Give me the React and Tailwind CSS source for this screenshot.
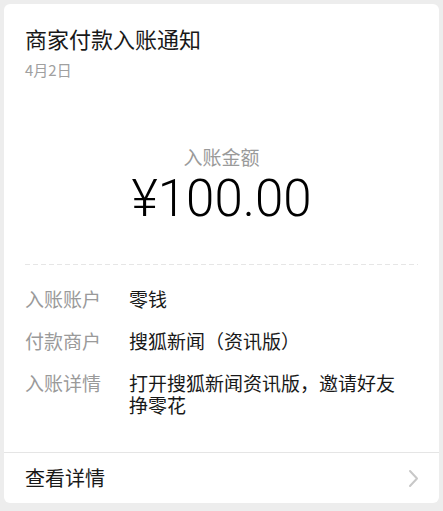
export default function App() {
  const cjk = { fontFamily: '"Noto Sans CJK SC", "Noto Sans", sans-serif' };
  return (
    <div className="w-[443px] h-[511px] bg-[#ededed] p-[4px] pb-[8px]" style={cjk}>
      <div className="bg-white rounded-[6px] h-[499px] flex flex-col overflow-hidden">
        <div className="px-[21px] pt-[19px] flex-1">
          <div className="text-[22px] leading-[30px] text-[#191919]">商家付款入账通知</div>
          <div className="mt-[7px] text-[15px] leading-[20px] text-[#a0a0a0]">4月2日</div>
          <div className="mt-[65px] text-center text-[19px] leading-[24px] text-[#9a9a9a]">入账金额</div>
          <div
            className="mt-[2px] text-center text-[51px] leading-[56px] font-light text-[#000]"
            style={{ fontFamily: 'Roboto, "Liberation Sans", Arial, sans-serif' }}
          >
            ¥100.00
          </div>
          <div className="mt-[37px] h-[1px] bg-[linear-gradient(to_right,#e6e6e6_60%,transparent_60%)] bg-[length:8px_1px] bg-repeat-x" />
          <div className="mt-[23px] flex flex-col gap-[20px] text-[19px] leading-[22px]">
            <div className="flex">
              <div className="w-[104px] shrink-0 text-[#9a9a9a]">入账账户</div>
              <div className="text-[#191919]">零钱</div>
            </div>
            <div className="flex">
              <div className="w-[104px] shrink-0 text-[#9a9a9a]">付款商户</div>
              <div className="text-[#191919]">搜狐新闻（资讯版）</div>
            </div>
            <div className="flex">
              <div className="w-[104px] shrink-0 text-[#9a9a9a]">入账详情</div>
              <div className="text-[#191919] max-w-[283px]">打开搜狐新闻资讯版，邀请好友挣零花</div>
            </div>
          </div>
        </div>
        <div className="h-[51px] border-t border-[#e5e5e5] flex items-center justify-between pl-[21px] pr-[20px]">
          <div className="text-[20px] text-[#191919]">查看详情</div>
          <svg width="11" height="19" viewBox="0 0 11 19" fill="none">
            <path d="M2 2 L9 9.5 L2 17" stroke="#c8c8c8" strokeWidth="2" strokeLinecap="round" strokeLinejoin="round" />
          </svg>
        </div>
      </div>
    </div>
  );
}
